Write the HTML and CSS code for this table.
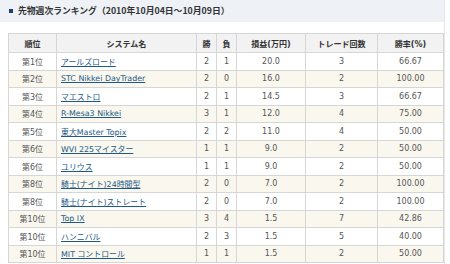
FILE: index.html
```html
<!DOCTYPE html>
<html lang="ja">
<head>
<meta charset="utf-8">
<link rel="stylesheet" href="styles.css">
</head>
<body>
<div class="page">
  <div class="title-bar">
    <span class="title-mark"></span>
    <h2 class="title">先物週次ランキング（2010年10月04日～10月09日）</h2>
  </div>
  <table class="rank">
    <colgroup>
      <col class="c-rank"><col class="c-name"><col class="c-win"><col class="c-lose"><col class="c-pl"><col class="c-trades"><col class="c-rate">
    </colgroup>
    <thead>
      <tr><th>順位</th><th>システム名</th><th>勝</th><th>負</th><th>損益(万円)</th><th>トレード回数</th><th>勝率(%)</th></tr>
    </thead>
    <tbody>
      <tr><td>第1位</td><td class="name"><a href="#">アールズロード</a></td><td>2</td><td>1</td><td>20.0</td><td>3</td><td>66.67</td></tr>
      <tr><td>第2位</td><td class="name"><a href="#">STC Nikkei DayTrader</a></td><td>2</td><td>0</td><td>16.0</td><td>2</td><td>100.00</td></tr>
      <tr><td>第3位</td><td class="name"><a href="#">マエストロ</a></td><td>2</td><td>1</td><td>14.5</td><td>3</td><td>66.67</td></tr>
      <tr><td>第4位</td><td class="name"><a href="#">R-Mesa3 Nikkei</a></td><td>3</td><td>1</td><td>12.0</td><td>4</td><td>75.00</td></tr>
      <tr><td>第5位</td><td class="name"><a href="#">東大Master Topix</a></td><td>2</td><td>2</td><td>11.0</td><td>4</td><td>50.00</td></tr>
      <tr><td>第6位</td><td class="name"><a href="#">WVI 225マイスター</a></td><td>1</td><td>1</td><td>9.0</td><td>2</td><td>50.00</td></tr>
      <tr><td>第6位</td><td class="name"><a href="#">ユリウス</a></td><td>1</td><td>1</td><td>9.0</td><td>2</td><td>50.00</td></tr>
      <tr><td>第8位</td><td class="name"><a href="#">騎士(ナイト)24時間型</a></td><td>2</td><td>0</td><td>7.0</td><td>2</td><td>100.00</td></tr>
      <tr><td>第8位</td><td class="name"><a href="#">騎士(ナイト)ストレート</a></td><td>2</td><td>0</td><td>7.0</td><td>2</td><td>100.00</td></tr>
      <tr><td>第10位</td><td class="name"><a href="#">Top IX</a></td><td>3</td><td>4</td><td>1.5</td><td>7</td><td>42.86</td></tr>
      <tr><td>第10位</td><td class="name"><a href="#">ハンニバル</a></td><td>2</td><td>3</td><td>1.5</td><td>5</td><td>40.00</td></tr>
      <tr><td>第10位</td><td class="name"><a href="#">MIT コントロール</a></td><td>1</td><td>1</td><td>1.5</td><td>2</td><td>50.00</td></tr>
    </tbody>
  </table>
</div>
</body>
</html>
```
FILE: styles.css
```css
html, body {
  margin: 0;
  padding: 0;
  background: #ffffff;
}
body {
  font-family: "DejaVu Sans", "Noto Sans CJK JP", sans-serif;
  color: #555;
}
.page {
  width: 445px;
  border-right: 1px solid #e6e6e6;
  min-height: 264px;
  box-sizing: border-box;
}
.title-bar {
  height: 22px;
  background: #eef1f6;
  display: flex;
  align-items: center;
  padding-left: 9px;
  gap: 5px;
}
.title-mark {
  width: 4px;
  height: 4px;
  background: #1d3f73;
  flex: none;
}
.title {
  margin: 0;
  font-family: "Noto Sans CJK JP", sans-serif;
  font-size: 8.8px;
  font-weight: bold;
  color: #333;
  line-height: 1;
  white-space: nowrap;
}
.rank {
  margin: 11px 0 0 8px;
  width: 435px;
  border-collapse: collapse;
  table-layout: fixed;
  font-size: 8px;
}
.c-rank { width: 48px; }
.c-name { width: 140px; }
.c-win { width: 20px; }
.c-lose { width: 20px; }
.c-pl { width: 69px; }
.c-trades { width: 72px; }
.c-rate { width: 66px; }
.rank th, .rank td {
  border: 1px solid #d6d6d6;
  text-align: center;
  padding: 0;
  white-space: nowrap;
  overflow: hidden;
}
.rank th {
  height: 18px;
  background: #f2f2f2;
  color: #333;
  font-weight: bold;
  font-size: 8px;
}
.rank td {
  height: 16.5px;
  color: #555;
}
.rank tbody tr:nth-child(even) td {
  background: #faf7ef;
}
.rank td.name {
  text-align: left;
  padding-left: 4px;
}
.rank td.name a {
  color: #1d5a86;
  text-decoration: underline;
  font-size: 7.9px;
}
```
